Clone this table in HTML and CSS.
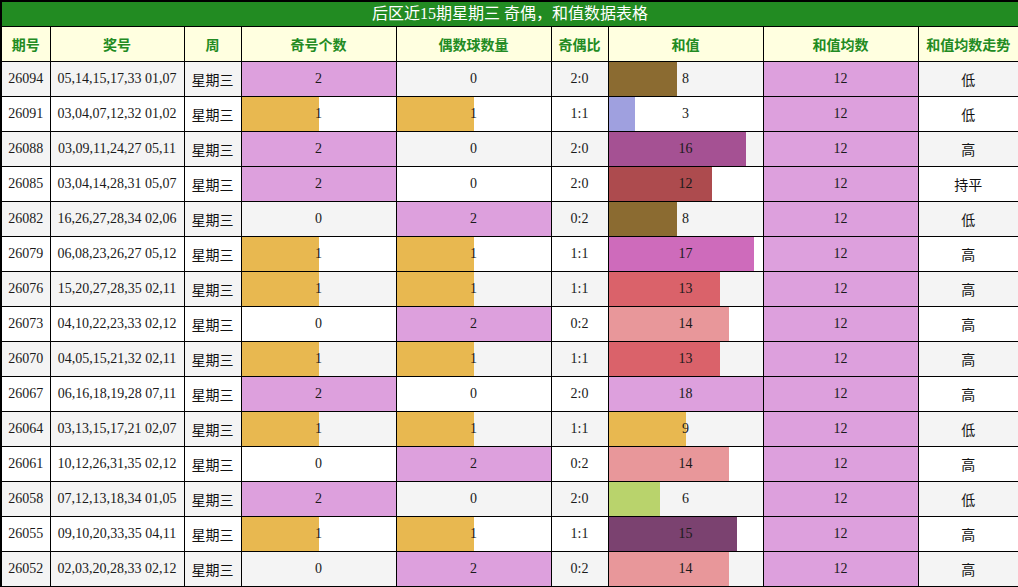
FILE: index.html
```html
<!DOCTYPE html>
<html lang="zh">
<head>
<meta charset="utf-8">
<link rel="stylesheet" href="styles.css">
</head>
<body>
<table class="tbl">
  <colgroup>
    <col class="c1"><col class="c2"><col class="c3"><col class="c4"><col class="c5"><col class="c6"><col class="c7"><col class="c8"><col class="c9">
  </colgroup>
  <thead>
    <tr><th class="title" colspan="9">后区近15期星期三 奇偶，和值数据表格</th></tr>
    <tr class="head">
      <th>期号</th><th>奖号</th><th>周</th><th>奇号个数</th><th>偶数球数量</th><th>奇偶比</th><th>和值</th><th>和值均数</th><th>和值均数走势</th>
    </tr>
  </thead>
  <tbody>
    <tr><td>26094</td><td>05,14,15,17,33 01,07</td><td class="cn">星期三</td><td class="bar" style="--w:100%;--c:#dda0dd">2</td><td class="bar" style="--w:0%">0</td><td>2:0</td><td class="bar" style="--w:44.4%;--c:#8b6b31">8</td><td class="bar" style="--w:100%;--c:#dda0dd">12</td><td class="cn">低</td></tr>
    <tr><td>26091</td><td>03,04,07,12,32 01,02</td><td class="cn">星期三</td><td class="bar" style="--w:50%;--c:#e8b850">1</td><td class="bar" style="--w:50%;--c:#e8b850">1</td><td>1:1</td><td class="bar" style="--w:16.7%;--c:#9fa0df">3</td><td class="bar" style="--w:100%;--c:#dda0dd">12</td><td class="cn">低</td></tr>
    <tr><td>26088</td><td>03,09,11,24,27 05,11</td><td class="cn">星期三</td><td class="bar" style="--w:100%;--c:#dda0dd">2</td><td class="bar" style="--w:0%">0</td><td>2:0</td><td class="bar" style="--w:88.9%;--c:#a55193">16</td><td class="bar" style="--w:100%;--c:#dda0dd">12</td><td class="cn">高</td></tr>
    <tr><td>26085</td><td>03,04,14,28,31 05,07</td><td class="cn">星期三</td><td class="bar" style="--w:100%;--c:#dda0dd">2</td><td class="bar" style="--w:0%">0</td><td>2:0</td><td class="bar" style="--w:66.7%;--c:#ad4b4e">12</td><td class="bar" style="--w:100%;--c:#dda0dd">12</td><td class="cn">持平</td></tr>
    <tr><td>26082</td><td>16,26,27,28,34 02,06</td><td class="cn">星期三</td><td class="bar" style="--w:0%">0</td><td class="bar" style="--w:100%;--c:#dda0dd">2</td><td>0:2</td><td class="bar" style="--w:44.4%;--c:#8b6b31">8</td><td class="bar" style="--w:100%;--c:#dda0dd">12</td><td class="cn">低</td></tr>
    <tr><td>26079</td><td>06,08,23,26,27 05,12</td><td class="cn">星期三</td><td class="bar" style="--w:50%;--c:#e8b850">1</td><td class="bar" style="--w:50%;--c:#e8b850">1</td><td>1:1</td><td class="bar" style="--w:94.4%;--c:#ce6bbb">17</td><td class="bar" style="--w:100%;--c:#dda0dd">12</td><td class="cn">高</td></tr>
    <tr><td>26076</td><td>15,20,27,28,35 02,11</td><td class="cn">星期三</td><td class="bar" style="--w:50%;--c:#e8b850">1</td><td class="bar" style="--w:50%;--c:#e8b850">1</td><td>1:1</td><td class="bar" style="--w:72.2%;--c:#da626a">13</td><td class="bar" style="--w:100%;--c:#dda0dd">12</td><td class="cn">高</td></tr>
    <tr><td>26073</td><td>04,10,22,23,33 02,12</td><td class="cn">星期三</td><td class="bar" style="--w:0%">0</td><td class="bar" style="--w:100%;--c:#dda0dd">2</td><td>0:2</td><td class="bar" style="--w:77.8%;--c:#e8979a">14</td><td class="bar" style="--w:100%;--c:#dda0dd">12</td><td class="cn">高</td></tr>
    <tr><td>26070</td><td>04,05,15,21,32 02,11</td><td class="cn">星期三</td><td class="bar" style="--w:50%;--c:#e8b850">1</td><td class="bar" style="--w:50%;--c:#e8b850">1</td><td>1:1</td><td class="bar" style="--w:72.2%;--c:#da626a">13</td><td class="bar" style="--w:100%;--c:#dda0dd">12</td><td class="cn">高</td></tr>
    <tr><td>26067</td><td>06,16,18,19,28 07,11</td><td class="cn">星期三</td><td class="bar" style="--w:100%;--c:#dda0dd">2</td><td class="bar" style="--w:0%">0</td><td>2:0</td><td class="bar" style="--w:100%;--c:#dda0dd">18</td><td class="bar" style="--w:100%;--c:#dda0dd">12</td><td class="cn">高</td></tr>
    <tr><td>26064</td><td>03,13,15,17,21 02,07</td><td class="cn">星期三</td><td class="bar" style="--w:50%;--c:#e8b850">1</td><td class="bar" style="--w:50%;--c:#e8b850">1</td><td>1:1</td><td class="bar" style="--w:50%;--c:#e8b850">9</td><td class="bar" style="--w:100%;--c:#dda0dd">12</td><td class="cn">低</td></tr>
    <tr><td>26061</td><td>10,12,26,31,35 02,12</td><td class="cn">星期三</td><td class="bar" style="--w:0%">0</td><td class="bar" style="--w:100%;--c:#dda0dd">2</td><td>0:2</td><td class="bar" style="--w:77.8%;--c:#e8979a">14</td><td class="bar" style="--w:100%;--c:#dda0dd">12</td><td class="cn">高</td></tr>
    <tr><td>26058</td><td>07,12,13,18,34 01,05</td><td class="cn">星期三</td><td class="bar" style="--w:100%;--c:#dda0dd">2</td><td class="bar" style="--w:0%">0</td><td>2:0</td><td class="bar" style="--w:33.3%;--c:#b9d36c">6</td><td class="bar" style="--w:100%;--c:#dda0dd">12</td><td class="cn">低</td></tr>
    <tr><td>26055</td><td>09,10,20,33,35 04,11</td><td class="cn">星期三</td><td class="bar" style="--w:50%;--c:#e8b850">1</td><td class="bar" style="--w:50%;--c:#e8b850">1</td><td>1:1</td><td class="bar" style="--w:83.3%;--c:#7b4270">15</td><td class="bar" style="--w:100%;--c:#dda0dd">12</td><td class="cn">高</td></tr>
    <tr><td>26052</td><td>02,03,20,28,33 02,12</td><td class="cn">星期三</td><td class="bar" style="--w:0%">0</td><td class="bar" style="--w:100%;--c:#dda0dd">2</td><td>0:2</td><td class="bar" style="--w:77.8%;--c:#e8979a">14</td><td class="bar" style="--w:100%;--c:#dda0dd">12</td><td class="cn">高</td></tr>
  </tbody>
</table>
</body>
</html>
```

FILE: styles.css
```css
html, body {
  margin: 0;
  padding: 0;
  background: #ffffff;
}

.tbl {
  width: 1018px;
  border-collapse: collapse;
  table-layout: fixed;
  border: 2px solid #000;
  font-family: "Liberation Serif", "Noto Sans CJK SC", serif;
  font-size: 14px;
  color: #1a1a1a;
}

.c1 { width: 49px; }
.c2 { width: 134px; }
.c3 { width: 57px; }
.c4 { width: 155px; }
.c5 { width: 155px; }
.c6 { width: 57px; }
.c7 { width: 155px; }
.c8 { width: 155px; }
.c9 { width: 101px; }

.tbl th,
.tbl td {
  border: 1px solid #000;
  padding: 0;
  text-align: center;
  vertical-align: middle;
  white-space: nowrap;
}

.title {
  background: #228b22;
  color: #fff;
  font-weight: normal;
  font-size: 16px;
  height: 24px;
  line-height: 24px;
}

.head th {
  background: #ffffe0;
  color: #228b22;
  font-weight: bold;
  font-family: "Noto Sans CJK SC", sans-serif;
  font-size: 14px;
  height: 34px;
}

.tbl tbody td {
  height: 34px;
}

.tbl tbody tr:nth-child(odd) td {
  background-color: #f4f4f4;
}

.tbl tbody tr:nth-child(even) td {
  background-color: #ffffff;
}

.tbl td.cn {
  font-family: "Noto Sans CJK SC", sans-serif;
  color: #111;
}

.tbl tbody td.bar {
  background-image: linear-gradient(to right, var(--c, transparent) var(--w), transparent var(--w));
  background-repeat: no-repeat;
}
```
